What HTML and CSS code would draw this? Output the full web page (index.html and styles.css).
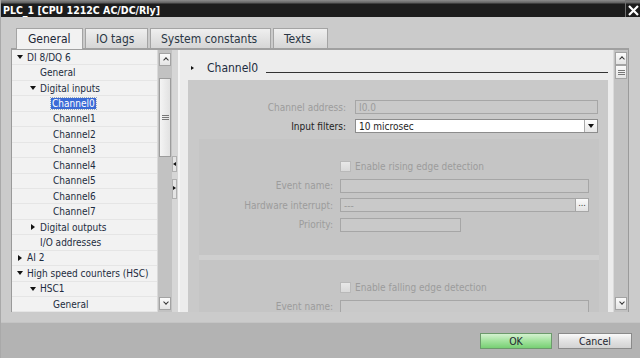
FILE: index.html
```html
<!DOCTYPE html>
<html lang="en">
<head>
    <meta charset="UTF-8">
    <title>PLC_1 [CPU 1212C AC/DC/Rly]</title>
    <link rel="stylesheet" href="styles.css">
</head>
<body>
    <div class="window">
        <div class="titlebar">
            <span class="title">PLC_1 [CPU 1212C AC/DC/Rly]</span>
            <span class="close">
                <svg width="11" height="11" viewBox="0 0 11 11"><path d="M1 1L10 10M10 1L1 10" stroke="#fff" stroke-width="2.2"/></svg>
            </span>
        </div>

        <div class="client">
            <div class="tabs">
                <div class="tab active">General</div>
                <div class="tab">IO tags</div>
                <div class="tab">System constants</div>
                <div class="tab">Texts</div>
            </div>

            <div class="frame">
                <!-- navigation tree -->
                <ul class="tree">
                    <li class="row lv0"><span class="twisty open"></span>DI 8/DQ 6</li>
                    <li class="row lv1"><span class="twisty"></span>General</li>
                    <li class="row lv1"><span class="twisty open"></span>Digital inputs</li>
                    <li class="row lv2"><span class="twisty"></span><span class="selected">Channel0</span></li>
                    <li class="row lv2"><span class="twisty"></span>Channel1</li>
                    <li class="row lv2"><span class="twisty"></span>Channel2</li>
                    <li class="row lv2"><span class="twisty"></span>Channel3</li>
                    <li class="row lv2"><span class="twisty"></span>Channel4</li>
                    <li class="row lv2"><span class="twisty"></span>Channel5</li>
                    <li class="row lv2"><span class="twisty"></span>Channel6</li>
                    <li class="row lv2"><span class="twisty"></span>Channel7</li>
                    <li class="row lv1"><span class="twisty closed"></span>Digital outputs</li>
                    <li class="row lv1"><span class="twisty"></span>I/O addresses</li>
                    <li class="row lv0"><span class="twisty closed"></span>AI 2</li>
                    <li class="row lv0"><span class="twisty open"></span>High speed counters (HSC)</li>
                    <li class="row lv1"><span class="twisty open"></span>HSC1</li>
                    <li class="row lv2"><span class="twisty"></span>General</li>
                </ul>

                <div class="vscroll tree-scroll">
                    <div class="sbtn up"></div>
                    <div class="thumb"><span class="grip"></span></div>
                    <div class="track-fill"></div>
                    <div class="sbtn down"></div>
                </div>

                <div class="splitter">
                    <span class="split-btn left"></span>
                    <span class="split-btn right"></span>
                </div>

                <!-- property pages -->
                <div class="props">
                    <div class="props-head">
                        <span class="head-arrow"></span>
                        <span class="head-title">Channel0</span>
                        <span class="head-line"></span>
                    </div>

                    <div class="block">
                        <div class="form main-form">
                            <label class="dim">Channel address:</label>
                            <div class="field">I0.0</div>
                            <label>Input filters:</label>
                            <div class="field select">10 microsec<span class="drop"></span></div>
                        </div>

                        <div class="subsection">
                            <div class="form sub-form">
                                <span></span>
                                <div class="check-row"><span class="checkbox"></span>Enable rising edge detection</div>
                                <label class="dim">Event name:</label>
                                <div class="field"></div>
                                <label class="dim">Hardware interrupt:</label>
                                <div class="field with-btn"><span class="field-text">---</span><span class="dots">...</span></div>
                                <label class="dim">Priority:</label>
                                <div class="field short"></div>
                            </div>
                        </div>

                        <div class="subsection">
                            <div class="form sub-form">
                                <span></span>
                                <div class="check-row"><span class="checkbox"></span>Enable falling edge detection</div>
                                <label class="dim">Event name:</label>
                                <div class="field"></div>
                            </div>
                        </div>
                    </div>
                </div>

                <div class="vscroll props-scroll">
                    <div class="sbtn up"></div>
                    <div class="sbtn grip-btn"><span class="grip"></span></div>
                    <div class="track-fill"></div>
                    <div class="sbtn down"></div>
                </div>
            </div>
        </div>

        <div class="footer">
            <button class="btn ok">OK</button>
            <button class="btn">Cancel</button>
        </div>
    </div>
</body>
</html>
```

FILE: styles.css
```css
* {
    margin: 0;
    padding: 0;
    box-sizing: border-box;
}

body {
    width: 640px;
    height: 358px;
    overflow: hidden;
    font-family: "DejaVu Sans Condensed", "DejaVu Sans", sans-serif;
    font-stretch: condensed;
    font-size: 10px;
    background: #cbcbcb;
}

.window {
    display: flex;
    flex-direction: column;
    height: 358px;
    border-left: 1px solid #a9a9a9;
}

/* title bar */
.titlebar {
    height: 17px;
    display: flex;
    align-items: center;
    justify-content: space-between;
    background: linear-gradient(#8c8c8c 0, #5e5e5e 3px, #1c1c1c 4px, #1c1c1c 100%);
    color: #fff;
}

.title {
    font-weight: bold;
    font-size: 10.5px;
    padding-left: 2px;
    padding-top: 3px;
}

.close {
    width: 15px;
    height: 17px;
    display: flex;
    align-items: center;
    justify-content: center;
    border-left: 1px solid #707070;
    border-top: 1px solid #707070;
    padding-top: 2px;
}

/* client area */
.client {
    height: 305px;
    padding: 11px 10px 0 10px;
    background: #cbcbcb;
}

.tabs {
    display: flex;
    height: 20px;
    padding-left: 5px;
    gap: 2px;
}

.tab {
    font-size: 12px;
    color: #2a3644;
    padding: 3px 10px 0;
    border: 1px solid #a4a4a4;
    border-bottom: none;
    background: linear-gradient(#efefef, #d6d6d6);
    height: 20px;
}

.tab:nth-child(2) { width: 63px; }
.tab:nth-child(3) { width: 121px; }
.tab:nth-child(4) { width: 55px; }

.tab.active {
    width: 67px;
    background: #f2f2f2;
    height: 21px;
    position: relative;
    z-index: 1;
    padding-left: 11px;
    color: #1b2736;
}

.frame {
    display: flex;
    width: 618px;
    height: 264px;
    border: 1px solid #9a9a9a;
    border-top: 2px solid #a0a0a0;
    border-bottom: none;
    background: #f0f0f0;
}

/* tree */
.tree {
    list-style: none;
    width: 145px;
    background: #f2f2f2;
    color: #1d2c40;
    overflow: hidden;
}

.row {
    display: flex;
    align-items: center;
    height: 15.45px;
    border-bottom: 1px solid #e5e5e5;
    white-space: nowrap;
    padding-left: 5px;
}

.row.lv1 { padding-left: 18px; }
.row.lv2 { padding-left: 31px; }

.twisty {
    width: 10px;
    height: 8px;
    flex-shrink: 0;
    position: relative;
}

.twisty.open::before {
    content: "";
    position: absolute;
    left: 0;
    top: 2px;
    border-left: 3px solid transparent;
    border-right: 3px solid transparent;
    border-top: 4px solid #111;
}

.twisty.closed::before {
    content: "";
    position: absolute;
    left: 1px;
    top: 1px;
    border-top: 3px solid transparent;
    border-bottom: 3px solid transparent;
    border-left: 4px solid #111;
}

.selected {
    background: #3b6bd6;
    color: #fff;
    outline: 1px dotted #9ab;
    padding: 0 1px;
    margin-left: -2px;
}

/* scrollbars */
.vscroll {
    width: 15px;
    display: flex;
    flex-direction: column;
    background: #c2c2c2;
    border-left: 1px solid #dadada;
    padding: 2px 1px;
}

.tree-scroll {
    padding-top: 3px;
}

.sbtn {
    height: 13px;
    background: linear-gradient(#fbfbfb, #e4e4e4);
    border: 1px solid #a3a3a3;
    position: relative;
    flex-shrink: 0;
}

.sbtn.up::before,
.sbtn.down::before {
    content: "";
    position: absolute;
    left: 4px;
    width: 3px;
    height: 3px;
    border-left: 1.5px solid #333;
    border-top: 1.5px solid #333;
}

.sbtn.up::before {
    top: 4px;
    transform: rotate(45deg);
}

.sbtn.down::before {
    top: 2px;
    transform: rotate(225deg);
}

.thumb {
    margin-top: 12px;
    height: 79px;
    background: linear-gradient(90deg, #f4f4f4, #e2e2e2);
    border: 1px solid #9c9c9c;
    display: flex;
    align-items: center;
    justify-content: center;
    flex-shrink: 0;
}

.grip {
    width: 7px;
    height: 5px;
    border-top: 1px solid #777;
    border-bottom: 1px solid #777;
    position: relative;
}

.grip::after {
    content: "";
    position: absolute;
    left: 0;
    right: 0;
    top: 1px;
    border-top: 1px solid #777;
}

.track-fill {
    flex: 1;
}

.grip-btn {
    display: flex;
    align-items: center;
    justify-content: center;
    height: 14px;
}

/* splitter */
.splitter {
    width: 8px;
    background: #d6d6d6;
    border-right: 2px solid #f4f4f4;
    display: flex;
    flex-direction: column;
    padding-top: 106px;
    gap: 7px;
}

.split-btn {
    width: 5px;
    height: 16px;
    background: #e4e4e4;
    border: 1px solid #b0b0b0;
    position: relative;
}

.split-btn.right {
    height: 20px;
}

.split-btn::before {
    content: "";
    position: absolute;
    top: 5px;
    border-top: 2.5px solid transparent;
    border-bottom: 2.5px solid transparent;
}

.split-btn.left::before {
    left: 0;
    border-right: 3px solid #111;
}

.split-btn.right::before {
    left: 0;
    top: 6px;
    border-left: 3px solid #111;
}

/* property pages */
.props {
    width: 433px;
    background: #ececec;
    overflow: hidden;
    padding-right: 5px;
}

.props-head {
    display: flex;
    align-items: center;
    height: 30px;
    padding-left: 11px;
    padding-top: 6px;
}

.head-arrow {
    width: 0;
    height: 0;
    border-top: 2.5px solid transparent;
    border-bottom: 2.5px solid transparent;
    border-left: 3px solid #111;
    margin-right: 13px;
}

.head-title {
    font-size: 12px;
    color: #1d2c40;
}

.head-line {
    flex: 1;
    height: 1px;
    background: #333;
    margin-left: 8px;
    margin-top: 8px;
}

.block {
    margin-left: 8px;
    height: 240px;
    background: #c9c9c9;
    padding: 20px 9px 0 11px;
}

.form {
    display: grid;
    align-items: center;
}

.main-form {
    grid-template-columns: 147px 243px;
    column-gap: 9px;
    row-gap: 5px;
    margin-left: -11px;
    padding-left: 11px;
}

.main-form label {
    text-align: right;
    color: #1e1e1e;
}

label.dim,
.form label.dim {
    color: #9c9c9c;
}

.field {
    height: 14px;
    border: 1px solid #a6a6a6;
    background: #c9c9c9;
    color: #9c9c9c;
    padding: 0 3px;
    display: flex;
    align-items: center;
    position: relative;
}

.field.select {
    background: #fff;
    border-color: #8c8c8c;
    color: #1e1e1e;
}

.drop {
    position: absolute;
    right: 0;
    top: 0;
    width: 13px;
    height: 12px;
    border-left: 1px solid #aaa;
    background: linear-gradient(#fdfdfd, #e6e6e6);
}

.drop::before {
    content: "";
    position: absolute;
    left: 3px;
    top: 4px;
    border-left: 3px solid transparent;
    border-right: 3px solid transparent;
    border-top: 4px solid #111;
}

.subsection {
    margin-top: 6px;
    height: 121px;
    background: #c5c5c5;
    border-bottom: 5px solid #cfcfcf;
    padding-top: 21px;
}

.subsection + .subsection {
    margin-top: 0;
    border-bottom: none;
}

.sub-form {
    grid-template-columns: 134px 249px;
    column-gap: 7px;
    row-gap: 5.5px;
}

.sub-form label {
    text-align: right;
}

.check-row {
    display: flex;
    align-items: center;
    color: #9c9c9c;
    height: 13px;
}

.checkbox {
    width: 11px;
    height: 11px;
    background: linear-gradient(#e8e8e8, #d9d9d9);
    border: 1px solid #b9b9b9;
    margin-right: 4px;
}

.field.with-btn {
    padding-right: 0;
}

.field-text {
    flex: 1;
}

.dots {
    width: 14px;
    height: 14px;
    margin-right: -1px;
    background: linear-gradient(#fafafa, #e2e2e2);
    border: 1px solid #a6a6a6;
    color: #333;
    font-size: 9px;
    text-align: center;
    line-height: 9px;
}

.field.short {
    width: 121px;
}

/* footer */
.footer {
    flex: 1;
    background: #b3b3b3;
    display: flex;
    justify-content: flex-end;
    align-items: flex-start;
    gap: 6px;
    padding: 10px 8px 0 0;
    border-top: 1px solid #c4c4c4;
}

.btn {
    width: 74px;
    height: 16px;
    font-family: inherit;
    font-size: 10.5px;
    color: #1e2630;
    border: 1px solid #8a8a8a;
    background: linear-gradient(#fafafa, #e2e2e2 50%, #d2d2d2);
}

.btn.ok {
    width: 72px;
    border-color: #6c9a6c;
    background: linear-gradient(#d4f2d0, #a2e29d 50%, #78d074);
}
```
